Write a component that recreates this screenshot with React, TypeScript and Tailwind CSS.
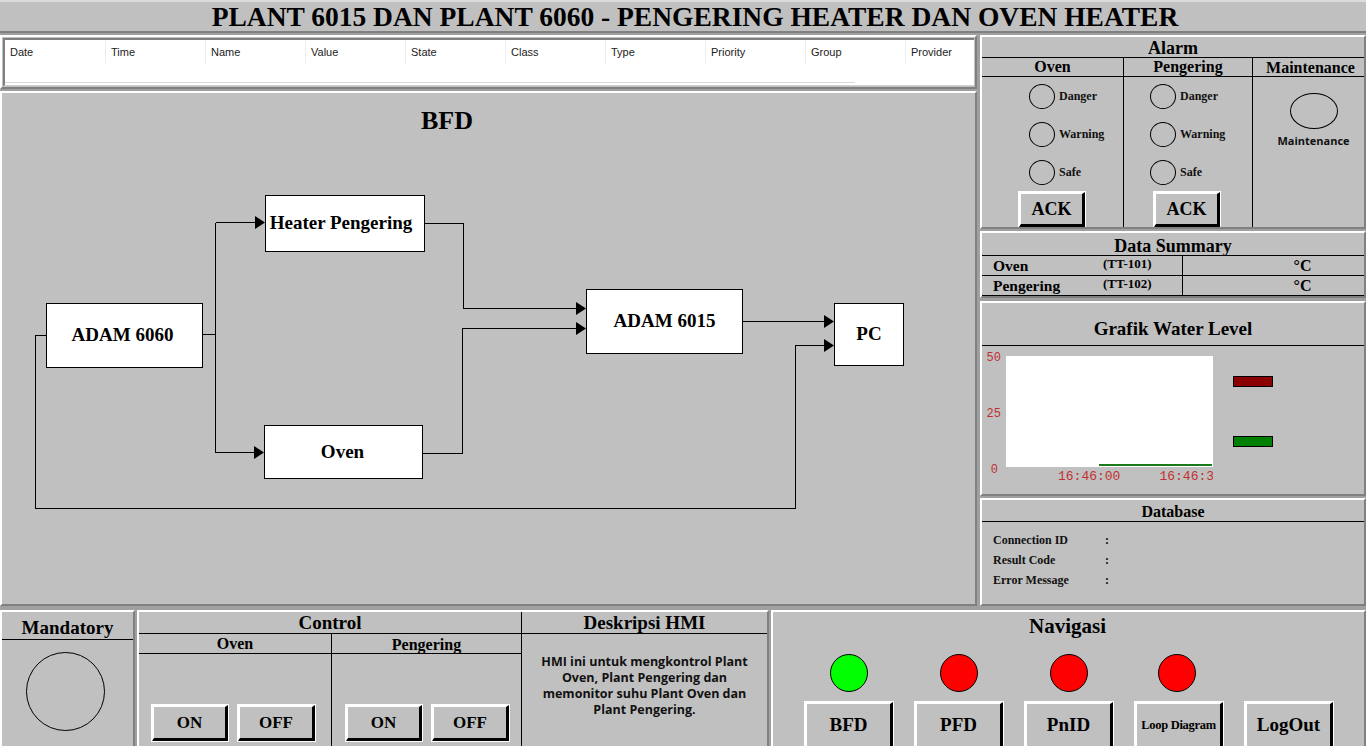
import React from "react";

const serif = { fontFamily: '"Liberation Serif", "Times New Roman", serif' };
const sans = { fontFamily: '"Liberation Sans", Arial, sans-serif' };
const tahoma = { fontFamily: '"Open Sans", "DejaVu Sans", sans-serif' };
const mono = { fontFamily: '"Liberation Mono", "Courier New", monospace' };

const panel =
  "bg-[#c0c0c0] border-2 border-t-white border-l-white border-r-[#808080] border-b-[#808080]";

function Btn({ label, className, textClass }: { label: string; className: string; textClass: string }) {
  return (
    <div
      className={
        "shrink-0 flex items-center justify-center bg-[#c0c0c0] border-t-2 border-l-2 border-t-white border-l-white border-r-[3px] border-b-[3px] border-r-black border-b-black outline outline-1 outline-white " +
        className
      }
    >
      <span className={"font-bold text-black whitespace-nowrap " + textClass} style={serif}>
        {label}
      </span>
    </div>
  );
}

function Circle({ className }: { className: string }) {
  return <div className={"shrink-0 rounded-[50%] border border-black " + className} />;
}

function AlarmCol({ pl, ackLeft }: { pl: string; ackLeft: string }) {
  const rows = ["Danger", "Warning", "Safe"];
  return (
    <div className="flex flex-col">
      <div className={"flex flex-col " + pl}>
        {rows.map((r) => (
          <div key={r} className="flex items-center h-[38px] shrink-0 gap-[4px]">
            <Circle className="w-[26px] h-[25px]" />
            <span className="text-[12px] font-bold text-[#111]" style={serif}>
              {r}
            </span>
          </div>
        ))}
      </div>
      <div className={"mt-[1px] " + ackLeft}>
        <Btn label="ACK" className="w-[66px] h-[35px]" textClass="text-[18px]" />
      </div>
    </div>
  );
}

export default function App() {
  const headers = ["Date", "Time", "Name", "Value", "State", "Class", "Type", "Priority", "Group", "Provider"];
  const arrows: [number, number][] = [
    [265, 222],
    [264, 452],
    [586, 308],
    [586, 328],
    [834, 321],
    [834, 345],
  ];
  return (
    <div className="w-[1366px] h-[746px] overflow-hidden bg-[#a0a0a0] flex flex-col" style={serif}>
      {/* Title */}
      <div className="h-[33px] shrink-0 bg-[#c0c0c0] border-t-2 border-t-[#dcdcdc] border-b-2 border-b-[#808080] flex items-center justify-center pl-[24px]">
        <span className="text-[27.5px] font-bold text-black leading-none whitespace-nowrap" style={serif}>
          PLANT 6015 DAN PLANT 6060 - PENGERING HEATER DAN OVEN HEATER
        </span>
      </div>

      {/* Middle */}
      <div className="h-[574px] shrink-0 flex pt-[2px] gap-[3px]">
        {/* Left column */}
        <div className="w-[977px] shrink-0 flex flex-col gap-[2px]">
          <div className={"h-[54px] shrink-0 " + panel + " p-[1px]"}>
            <div className="h-full bg-white border-t-2 border-l-2 border-t-[#808080] border-l-[#808080] border-b border-b-[#d0d0d0] relative overflow-hidden">
              <div className="flex h-[24px] items-center">
                {headers.map((h, i) => (
                  <div
                    key={h}
                    className={"w-[100px] shrink-0 h-full flex items-center pl-[5px] text-[11px] text-[#222] " + (i > 0 ? "border-l border-[#eeeeee]" : "")}
                    style={sans}
                  >
                    {h}
                  </div>
                ))}
              </div>
              <div className="absolute left-[0px] bottom-[2px] w-[850px] h-[1px] bg-[#d8d8d8]" />
            </div>
          </div>

          {/* BFD */}
          <div className={"h-[515px] shrink-0 relative " + panel}>
            <div className="absolute left-[445px] top-[27px] -translate-x-1/2 -translate-y-1/2 text-[26px] font-bold text-black" style={serif}>
              BFD
            </div>
            <svg className="absolute left-0 top-0" width={973} height={511} viewBox="2 93 973 511">
              <g stroke="black" strokeWidth={1} fill="none" shapeRendering="crispEdges">
                <path d="M202 334.5 H215.5 M215.5 222.5 V452.5 M215.5 222.5 H257 M215.5 452.5 H256" />
                <path d="M424 223.5 H463.5 V308.5 H578" />
                <path d="M422 453.5 H462.5 V328.5 H578" />
                <path d="M742 321.5 H826" />
                <path d="M46 335.5 H35.5 V508.5 H795.5 V345.5 H826" />
              </g>
              {arrows.map(([x, y], i) => (
                <polygon key={i} points={`${x},${y + 0.5} ${x - 10},${y - 6} ${x - 10},${y + 7}`} fill="black" />
              ))}
            </svg>
            {[
              { t: "Heater Pengering", l: 263, tp: 102, w: 160, h: 57, pr: 8 },
              { t: "ADAM 6060", l: 44, tp: 210, w: 157, h: 65, pr: 4 },
              { t: "Oven", l: 262, tp: 332, w: 159, h: 54, pr: 2 },
              { t: "ADAM 6015", l: 584, tp: 196, w: 157, h: 65, pr: 0 },
              { t: "PC", l: 832, tp: 210, w: 70, h: 63, pr: 0 },
            ].map((b) => (
              <div
                key={b.t}
                className="absolute bg-white border border-black flex items-center justify-center"
                style={{ left: b.l, top: b.tp, width: b.w, height: b.h, paddingRight: b.pr }}
              >
                <span className="text-[19px] font-bold text-black whitespace-nowrap" style={serif}>
                  {b.t}
                </span>
              </div>
            ))}
          </div>
        </div>

        {/* Right column */}
        <div className="w-[386px] shrink-0 flex flex-col">
          {/* Alarm */}
          <div className={"h-[194px] shrink-0 flex flex-col overflow-hidden " + panel}>
            <div className="h-[21px] shrink-0 border-b border-black flex items-end justify-center text-[18px] font-bold leading-none" style={serif}>
              Alarm
            </div>
            <div className="flex-1 grid grid-cols-[142px_129px_1fr]">
              <div className="flex flex-col border-r border-black">
                <div className="h-[19px] shrink-0 border-b border-black flex items-center justify-center text-[16px] font-bold leading-none" style={serif}>
                  Oven
                </div>
                <AlarmCol pl="pl-[47px]" ackLeft="pl-[37px]" />
              </div>
              <div className="flex flex-col border-r border-black">
                <div className="h-[19px] shrink-0 border-b border-black flex items-center justify-center text-[16px] font-bold leading-none" style={serif}>
                  Pengering
                </div>
                <AlarmCol pl="pl-[26px]" ackLeft="pl-[30px]" />
              </div>
              <div className="flex flex-col">
                <div className="h-[19px] shrink-0 border-b border-black flex items-end justify-center pl-[4px] text-[16px] font-bold leading-none" style={serif}>
                  Maintenance
                </div>
                <div className="flex flex-col items-center pt-[16px] pl-[10px]">
                  <Circle className="w-[48px] h-[36px]" />
                  <span className="mt-[4px] text-[11px] font-bold text-[#111]" style={tahoma}>
                    Maintenance
                  </span>
                </div>
              </div>
            </div>
          </div>

          {/* Data Summary */}
          <div className={"h-[67px] shrink-0 mt-[2px] flex flex-col " + panel}>
            <div className="h-[23px] shrink-0 border-b border-black flex items-end justify-center text-[18px] font-bold leading-none" style={serif}>
              Data Summary
            </div>
            {[
              ["Oven", "(TT-101)"],
              ["Pengering", "(TT-102)"],
            ].map(([a, b]) => (
              <div key={a} className="h-[20px] shrink-0 border-b border-black flex items-stretch">
                <div className="w-[201px] flex items-center border-r border-black">
                  <span className="w-[121px] pl-[11px] text-[15.5px] font-bold leading-none" style={serif}>
                    {a}
                  </span>
                  <span className="text-[13px] font-bold leading-none -mt-[4px]" style={serif}>
                    {b}
                  </span>
                </div>
                <div className="flex-1 flex items-center justify-center pl-[58px] text-[16px] font-bold leading-none" style={serif}>
                  °C
                </div>
              </div>
            ))}
          </div>

          {/* Grafik */}
          <div className={"h-[195px] shrink-0 mt-[3px] flex flex-col " + panel}>
            <div className="h-[43px] shrink-0 border-b border-black flex items-end justify-center pb-[7px] text-[19px] font-bold leading-none" style={serif}>
              Grafik Water Level
            </div>
            <div className="flex pt-[10px]">
              <div className="w-[24px] h-[124px] flex flex-col justify-between items-end -mt-[4px] text-[12px] text-[#c03030] leading-none" style={mono}>
                <span className="pr-[5px]">50</span>
                <span className="pr-[5px]">25</span>
                <span className="pr-[8px]">0</span>
              </div>
              <div className="flex flex-col">
                <div className="w-[207px] h-[111px] bg-white relative">
                  <div className="absolute left-[93px] right-[1px] bottom-[1px] h-[2px] bg-[#1a7a1a]" />
                </div>
                <div className="w-[207px] overflow-hidden whitespace-nowrap flex text-[13px] text-[#c03030] pt-[3px] leading-none" style={mono}>
                  <span className="pl-[52px]">16:46:00</span>
                  <span className="pl-[39px]">16:46:30</span>
                </div>
              </div>
              <div className="flex flex-col pl-[20px] pt-[20px]">
                <div className="w-[40px] h-[11px] bg-[#8b0000] border border-black" />
                <div className="w-[40px] h-[11px] bg-[#008000] border border-black mt-[49px]" />
              </div>
            </div>
          </div>

          {/* Database */}
          <div className={"h-[108px] shrink-0 mt-[2px] flex flex-col " + panel}>
            <div className="h-[22px] shrink-0 border-b border-black flex items-end justify-center pb-[1px] text-[16px] font-bold leading-none" style={serif}>
              Database
            </div>
            <div className="flex flex-col pt-[8px] pl-[11px]">
              {["Connection ID", "Result Code", "Error Message"].map((t) => (
                <div key={t} className="h-[20px] flex items-center text-[12px] font-bold text-[#111]" style={serif}>
                  <span className="w-[112px]">{t}</span>
                  <span>:</span>
                </div>
              ))}
            </div>
          </div>
        </div>
      </div>

      {/* Bottom */}
      <div className="flex pt-[3px] gap-[2px]">
        {/* Mandatory */}
        <div className={"w-[135px] shrink-0 h-[145px] flex flex-col " + panel}>
          <div className="h-[28px] shrink-0 border-b border-black flex items-end justify-center pb-[2px] text-[19px] font-bold leading-none" style={serif}>
            Mandatory
          </div>
          <div className="flex justify-center pt-[12px] pr-[4px]">
            <Circle className="w-[79px] h-[79px]" />
          </div>
        </div>

        {/* Control + Deskripsi */}
        <div className={"w-[632px] shrink-0 h-[145px] flex " + panel}>
          <div className="w-[383px] flex flex-col border-r border-black">
            <div className="h-[22px] shrink-0 border-b border-black flex items-center justify-center text-[19px] font-bold leading-none" style={serif}>
              Control
            </div>
            <div className="flex flex-1">
              <div className="w-[193px] flex flex-col border-r border-black">
                <div className="h-[20px] shrink-0 border-b border-black flex items-center justify-center text-[16px] font-bold leading-none" style={serif}>
                  Oven
                </div>
                <div className="flex gap-[10px] pl-[13px] pt-[51px]">
                  <Btn label="ON" className="w-[76px] h-[36px]" textClass="text-[17px]" />
                  <Btn label="OFF" className="w-[77px] h-[36px]" textClass="text-[17px]" />
                </div>
              </div>
              <div className="flex-1 flex flex-col">
                <div className="h-[20px] shrink-0 border-b border-black flex items-end justify-center text-[16px] font-bold leading-none" style={serif}>
                  Pengering
                </div>
                <div className="flex gap-[10px] pl-[14px] pt-[51px]">
                  <Btn label="ON" className="w-[76px] h-[36px]" textClass="text-[17px]" />
                  <Btn label="OFF" className="w-[77px] h-[36px]" textClass="text-[17px]" />
                </div>
              </div>
            </div>
          </div>
          <div className="flex-1 flex flex-col">
            <div className="h-[22px] shrink-0 border-b border-black flex items-center justify-center text-[19px] font-bold leading-none" style={serif}>
              Deskripsi HMI
            </div>
            <div className="pt-[20px] px-[4px] text-center text-[12.5px] font-bold leading-[16px] text-[#111] whitespace-nowrap" style={tahoma}>
              HMI ini untuk mengkontrol Plant
              <br />
              Oven, Plant Pengering dan
              <br />
              memonitor suhu Plant Oven dan
              <br />
              Plant Pengering.
            </div>
          </div>
        </div>

        {/* Navigasi */}
        <div className={"flex-1 h-[145px] flex flex-col " + panel}>
          <div className="h-[25px] shrink-0 flex items-end justify-center pr-[2px] text-[21px] font-bold leading-none" style={serif}>
            Navigasi
          </div>
          <div className="grid grid-cols-[88px_88px_88px_88px_88px] gap-x-[22px] pl-[32px] pt-[17px]">
            <div className="flex justify-center">
              <div className="w-[38px] h-[38px] rounded-full bg-[#00ff00] border border-black" />
            </div>
            <div className="flex justify-center">
              <div className="w-[38px] h-[38px] rounded-full bg-[#ff0000] border border-black" />
            </div>
            <div className="flex justify-center">
              <div className="w-[38px] h-[38px] rounded-full bg-[#ff0000] border border-black" />
            </div>
            <div className="flex justify-center pr-[4px]">
              <div className="w-[38px] h-[38px] rounded-full bg-[#ff0000] border border-black" />
            </div>
            <div />
            <div className="col-span-5 h-[10px]" />
            <Btn label="BFD" className="w-[88px] h-[48px]" textClass="text-[19px]" />
            <Btn label="PFD" className="w-[88px] h-[48px]" textClass="text-[19px]" />
            <Btn label="PnID" className="w-[88px] h-[48px]" textClass="text-[19px]" />
            <Btn label="Loop Diagram" className="w-[88px] h-[48px]" textClass="text-[12.5px] tracking-[-0.3px]" />
            <Btn label="LogOut" className="w-[88px] h-[48px]" textClass="text-[19px]" />
          </div>
        </div>
      </div>
    </div>
  );
}
